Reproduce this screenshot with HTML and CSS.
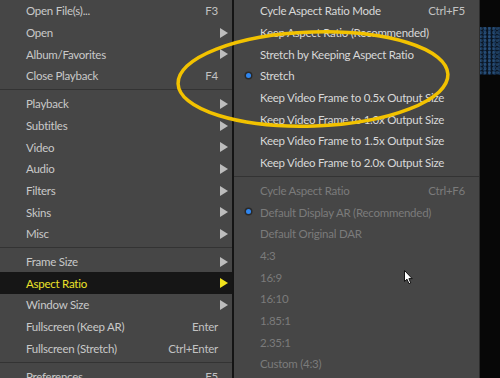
FILE: index.html
```html
<html>
<head>
    <title>Player Menu - Aspect Ratio</title>
    <link rel="stylesheet" href="styles.css">
</head>
<body>
    <div class="screen">
        <ul class="menu main-menu">
            <li class="item"><span class="label">Open File(s)...</span><span class="key">F3</span></li>
            <li class="item sub"><span class="label">Open</span></li>
            <li class="item sub"><span class="label">Album/Favorites</span></li>
            <li class="item"><span class="label">Close Playback</span><span class="key">F4</span></li>
            <li class="sep"></li>
            <li class="item sub"><span class="label">Playback</span></li>
            <li class="item sub"><span class="label">Subtitles</span></li>
            <li class="item sub"><span class="label">Video</span></li>
            <li class="item sub"><span class="label">Audio</span></li>
            <li class="item sub"><span class="label">Filters</span></li>
            <li class="item sub"><span class="label">Skins</span></li>
            <li class="item sub"><span class="label">Misc</span></li>
            <li class="sep"></li>
            <li class="item sub"><span class="label">Frame Size</span></li>
            <li class="item sub active"><span class="label">Aspect Ratio</span></li>
            <li class="item sub"><span class="label">Window Size</span></li>
            <li class="item"><span class="label">Fullscreen (Keep AR)</span><span class="key">Enter</span></li>
            <li class="item"><span class="label">Fullscreen (Stretch)</span><span class="key">Ctrl+Enter</span></li>
            <li class="sep"></li>
            <li class="item"><span class="label">Preferences</span><span class="key">F5</span></li>
        </ul>
        <ul class="menu sub-menu">
            <li class="item bright"><span class="label">Cycle Aspect Ratio Mode</span><span class="key">Ctrl+F5</span></li>
            <li class="item bright"><span class="label">Keep Aspect Ratio (Recommended)</span></li>
            <li class="item bright"><span class="label">Stretch by Keeping Aspect Ratio</span></li>
            <li class="item bright checked"><span class="label">Stretch</span></li>
            <li class="item bright"><span class="label">Keep Video Frame to 0.5x Output Size</span></li>
            <li class="item bright"><span class="label">Keep Video Frame to 1.0x Output Size</span></li>
            <li class="item bright"><span class="label">Keep Video Frame to 1.5x Output Size</span></li>
            <li class="item bright"><span class="label">Keep Video Frame to 2.0x Output Size</span></li>
            <li class="sep"></li>
            <li class="item disabled"><span class="label">Cycle Aspect Ratio</span><span class="key">Ctrl+F6</span></li>
            <li class="item disabled checked"><span class="label">Default Display AR (Recommended)</span></li>
            <li class="item disabled"><span class="label">Default Original DAR</span></li>
            <li class="item disabled"><span class="label">4:3</span></li>
            <li class="item disabled"><span class="label">16:9</span></li>
            <li class="item disabled"><span class="label">16:10</span></li>
            <li class="item disabled"><span class="label">1.85:1</span></li>
            <li class="item disabled"><span class="label">2.35:1</span></li>
            <li class="item disabled"><span class="label">Custom (4:3)</span></li>
        </ul>
        <div class="video">
            <div class="video-frame"></div>
        </div>
    </div>

    <!-- annotation + mouse pointer drawn over the menus -->
    <svg class="mark" width="500" height="378" viewBox="0 0 500 378">
        <ellipse cx="313" cy="79" rx="135" ry="47" transform="rotate(-2 313 79)"
                 fill="none" stroke="#f2c200" stroke-width="3.5"/>
    </svg>
    <svg class="pointer" width="10" height="15" viewBox="0 0 10 15">
        <path d="M0.5 0.5 L0.5 11.5 L3 9.2 L5 13.8 L6.8 13 L4.9 8.6 L8.2 8.6 Z"
              fill="#fff" stroke="#111" stroke-width="1"/>
    </svg>
</body>
</html>
```

FILE: styles.css
```css
body {
    margin: 0;
    background: #0b0b0b;
    font-family: Lato, "Noto Sans", sans-serif;
    font-size: 11.5px;
    letter-spacing: -0.25px;
}
.screen {
    display: flex;
    width: 500px;
    height: 378px;
    overflow: hidden;
}
.menu {
    list-style: none;
    margin: 0;
    padding: 0;
    background-color: #464646;
    flex-shrink: 0;
}
.main-menu {
    width: 232px;
    border-right: 2px solid #141414;
}
.sub-menu {
    width: 245px;
    border-right: 1px solid #2c2c2c;
}
.item {
    display: flex;
    align-items: center;
    height: 21.7px;
    padding-left: 26px;
    padding-right: 14px;
    color: #c9c9c9;
    position: relative;
}
.label {
    flex: 1;
    white-space: nowrap;
}
.key {
    color: #c2c2c2;
}
.sub::after {
    content: "";
    position: absolute;
    right: 4px;
    top: 6px;
    border-left: 8px solid #bdbdbd;
    border-top: 5px solid transparent;
    border-bottom: 5px solid transparent;
}
.active {
    background-color: #161616;
    color: #ece22a;
}
.active::after {
    border-left-color: #f0e21c;
}
.bright {
    color: #d8d8d8;
}
.disabled,
.disabled .key {
    color: #7b7b7b;
}
.checked::before {
    content: "";
    position: absolute;
    left: 12px;
    top: 8px;
    width: 5px;
    height: 5px;
    border-radius: 50%;
    background: #2f86f0;
    box-shadow: 0 0 0 1.5px #2a2a2a;
}
.sep {
    height: 1px;
    margin: 2.5px 0 2.6px;
    background: #333;
}
.video {
    flex: 1;
    background: #070707;
    padding-top: 27px;
}
.video-frame {
    height: 48px;
    background:
        radial-gradient(circle at 30% 40%, rgba(70, 130, 190, 0.35) 0 1px, transparent 2px) 0 0 / 4px 4px,
        radial-gradient(circle at 70% 60%, rgba(40, 90, 150, 0.45) 0 1px, transparent 2px) 1px 2px / 5px 3px,
        #0a1522;
}
.mark {
    position: absolute;
    left: 0;
    top: 0;
    pointer-events: none;
}
.pointer {
    position: absolute;
    left: 404px;
    top: 270px;
}
```
